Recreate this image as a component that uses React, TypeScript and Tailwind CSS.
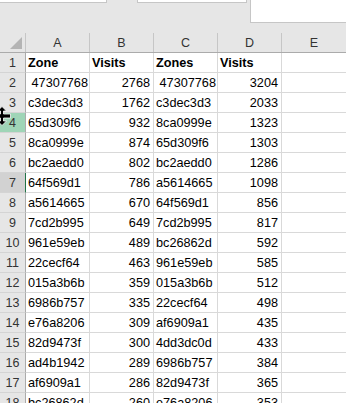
import React from "react";

const rows: [string, string, string, string][] = [
  [" 47307768", "2768", " 47307768", "3204"],
  ["c3dec3d3", "1762", "c3dec3d3", "2033"],
  ["65d309f6", "932", "8ca0999e", "1323"],
  ["8ca0999e", "874", "65d309f6", "1303"],
  ["bc2aedd0", "802", "bc2aedd0", "1286"],
  ["64f569d1", "786", "a5614665", "1098"],
  ["a5614665", "670", "64f569d1", "856"],
  ["7cd2b995", "649", "7cd2b995", "817"],
  ["961e59eb", "489", "bc26862d", "592"],
  ["22cecf64", "463", "961e59eb", "585"],
  ["015a3b6b", "359", "015a3b6b", "512"],
  ["6986b757", "335", "22cecf64", "498"],
  ["e76a8206", "309", "af6909a1", "435"],
  ["82d9473f", "300", "4dd3dc0d", "433"],
  ["ad4b1942", "289", "6986b757", "384"],
  ["af6909a1", "286", "82d9473f", "365"],
  ["bc26862d", "260", "e76a8206", "353"],
];

const font = { fontFamily: '"Liberation Sans", Arial, sans-serif' };

function Cell({ children, right, bold }: { children?: React.ReactNode; right?: boolean; bold?: boolean }) {
  return (
    <div
      className={
        "w-[64px] h-[20px] shrink-0 border-r border-b border-[#d9d9d9] px-[2px] text-[12.7px] leading-[21px] text-black whitespace-pre overflow-hidden " +
        (right ? "text-right pr-[3px] " : "text-left ") +
        (bold ? "font-bold" : "")
      }
    >
      {children}
    </div>
  );
}

function RowHead({ n }: { n: number }) {
  let cls = "bg-[#e6e6e6] border-r border-[#ababab] text-[#333]";
  if (n === 4) cls = "bg-[#9fd5b7] border-r border-[#ababab] text-[#333]";
  if (n === 7) cls = "bg-[#d2d2d2] border-r border-[#217346] text-[#333]";
  return (
    <div
      className={
        "w-[26px] h-[20px] shrink-0 border-b border-b-[#d4d4d4] text-center text-[12.5px] leading-[21px] " + cls
      }
    >
      {n}
    </div>
  );
}

export default function App() {
  return (
    <div className="relative w-[346px] h-[403px] overflow-hidden bg-white" style={font}>
      {/* top area */}
      <div className="h-[33px] bg-[#e6e6e6] flex items-start">
        <div className="w-[107px] h-[3px] bg-white border-r border-b border-[#c6c6c6]" />
        <div className="ml-[30px] w-[110px] h-[3px] bg-white border-l border-r border-b border-[#c6c6c6]" />
        <div className="ml-[3px] flex-1 h-[23px] bg-white border-l border-b border-[#c6c6c6]" />
      </div>
      {/* column headers */}
      <div className="flex h-[20px] bg-[#e6e6e6] border-b border-[#ababab]">
        <div className="relative w-[26px] h-[19px] shrink-0 border-r border-[#c6c6c6]">
          <svg className="absolute left-[10px] top-[4px]" width="12" height="12" viewBox="0 0 12 12">
            <polygon points="12,0 12,12 0,12" fill="#b4b4b4" />
          </svg>
        </div>
        {["A", "B", "C", "D"].map((c) => (
          <div
            key={c}
            className="w-[64px] h-[19px] shrink-0 border-r border-[#c6c6c6] text-center text-[12.5px] leading-[21px] text-[#333]"
          >
            {c}
          </div>
        ))}
        <div className="flex-1 h-[19px] text-center text-[12.5px] leading-[21px] text-[#333]">E</div>
      </div>
      {/* row 1 */}
      <div className="flex">
        <RowHead n={1} />
        <Cell bold>Zone</Cell>
        <Cell bold>Visits</Cell>
        <Cell bold>Zones</Cell>
        <Cell bold>Visits</Cell>
        <div className="flex-1 h-[20px] border-b border-[#d9d9d9]" />
      </div>
      {rows.map((r, i) => (
        <div key={i} className="flex">
          <RowHead n={i + 2} />
          <Cell>{r[0]}</Cell>
          <Cell right>{r[1]}</Cell>
          <Cell>{r[2]}</Cell>
          <Cell right>{r[3]}</Cell>
          <div className="flex-1 h-[20px] border-b border-[#d9d9d9]" />
        </div>
      ))}
      {/* row resize cursor */}
      <svg className="absolute left-[-5px] top-[106px]" width="16" height="20" viewBox="0 0 16 20">
        <path
          d="M7 0.5 L11.5 5 L8.5 5 L8.5 8 L15.5 8 L15.5 12 L8.5 12 L8.5 15 L11.5 15 L7 19.5 L2.5 15 L5.5 15 L5.5 12 L-1 12 L-1 8 L5.5 8 L5.5 5 L2.5 5 Z"
          fill="#000"
          stroke="#fff"
          strokeWidth="0.8"
        />
      </svg>
    </div>
  );
}
